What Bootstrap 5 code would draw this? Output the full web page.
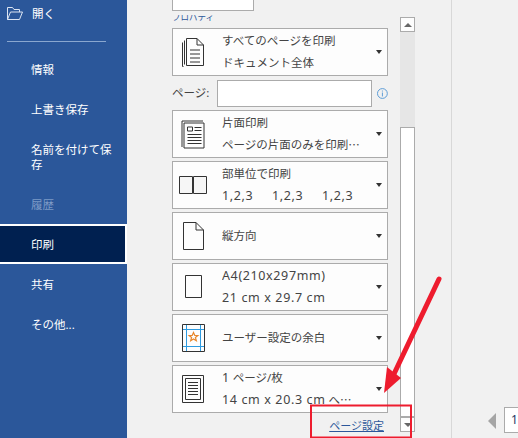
<!DOCTYPE html>
<html lang="ja">
<head>
<meta charset="utf-8">
<title>印刷</title>
<link href="https://cdn.jsdelivr.net/npm/bootstrap@5.3.0/dist/css/bootstrap.min.css" rel="stylesheet">
<style>
html,body{height:100%;}
body{width:518px;height:438px;overflow:hidden;background:#f1f1f1;font-family:"Noto Sans","Noto Sans CJK JP",sans-serif;font-size:11.5px;color:#444;position:relative;}
.shell{height:438px;}
.side{width:127px;flex:none;background:#2b579a;color:#fff;margin-top:-7px;height:445px;}
.side-item{height:40px;padding-left:31px;font-size:11.5px;line-height:15px;}
.side-open{padding-left:7px;gap:9px;}
.side-tall{height:55px;padding-right:14px;}
.side-rule{height:1px;background:#8aa7cf;margin:8px 21px 7px 7px;}
.side-off{color:#7d9ac6;}
.side-on{background:#002050;border:2px solid #fff;border-left:0;padding-left:31px;}
.panel{width:273px;flex:none;padding-left:45px;}
.stub{width:82px;height:11px;background:#fff;border:1px solid #ababab;border-top:0;}
.clipped{height:6px;width:60px;margin-top:4px;overflow:hidden;color:#2b579a;font-size:8.5px;display:flex;align-items:flex-end;}
.clipped span{display:block;flex:none;line-height:9px;white-space:nowrap;}
.stack{gap:3px;width:216px;margin-top:7px;}
.picker{height:48px;width:216px;background:#fdfdfd;border:1px solid #ababab;border-radius:0;padding:0 5px 0 0;color:#444;font-size:11.5px;text-align:left;line-height:22px;}
.picker:hover{background:#fdfdfd;border-color:#ababab;color:#444;}
.picker.dropdown-toggle::after{border-top:4px solid #333;border-left:3.5px solid transparent;border-right:3.5px solid transparent;border-bottom:0;margin:0;flex:none;}
.pick-icon{width:40px;flex:none;display:flex;justify-content:center;}
.pick-text{margin-left:9px;flex:1;min-width:0;white-space:nowrap;overflow:hidden;}
.wide{letter-spacing:.05em;font-size:12.5px;}
.triplet{display:inline-block;width:50px;}
.range{height:27px;margin:1px 0 0;}
.range-label{width:46px;font-size:11.5px;}
.range-input{width:155px;height:27px;border:1px solid #ababab;border-radius:0;padding:0 4px;background:#fff;}
.info{margin-left:5px;}
.page-link-row{height:26px;width:212px;text-align:right;}
.page-setup{color:#2b579a;font-size:11px;text-decoration:underline;}
.rail{width:15px;flex:none;padding-top:17px;}
.rail-btn{height:15px;border:1px solid #ababab;background:#fdfdfd;display:flex;align-items:center;justify-content:center;flex:none;}
.rail-track{height:95px;background:#e6e6e6;}
.rail-thumb{height:290px;background:#fff;border:1px solid #ababab;}
.tri-up{width:0;height:0;border-left:4px solid transparent;border-right:4px solid transparent;border-bottom:4px solid #666;}
.tri-down{width:0;height:0;border-left:4px solid transparent;border-right:4px solid transparent;border-top:4px solid #666;}
.preview{border-left:1px solid #d8d8d8;margin-left:36px;flex:1;min-width:0;padding-left:36px;padding-bottom:5px;}
.tri-left{width:0;height:0;border-top:8px solid transparent;border-bottom:8px solid transparent;border-right:8px solid #a5a5a5;margin-right:8px;}
.page-num{width:14px;height:26px;background:#fff;border:1px solid #ababab;border-right:0;color:#1f3864;font-size:12px;line-height:24px;padding-left:6px;flex:none;}
.overlay{position:absolute;left:0;top:0;pointer-events:none;}
</style>
</head>
<body>
<div class="shell d-flex">
  <nav class="side d-flex flex-column">
    <div class="side-item side-open d-flex align-items-center">
      <svg width="16" height="13" viewBox="0 0 16 13" fill="none" stroke="#dbe4f2" stroke-width="1"><path d="M.5 12.5V.5h5l1.500 2h5.500v2.500M.5 12.500h12l3-7.500H3.500L.5 12.500z"/></svg>
      <span>開く</span>
    </div>
    <div class="side-rule"></div>
    <div class="side-item d-flex align-items-center">情報</div>
    <div class="side-item d-flex align-items-center">上書き保存</div>
    <div class="side-item side-tall d-flex align-items-center">名前を付けて保存</div>
    <div class="side-item side-off d-flex align-items-center">履歴</div>
    <div class="side-item side-on d-flex align-items-center">印刷</div>
    <div class="side-item d-flex align-items-center">共有</div>
    <div class="side-item d-flex align-items-center">その他...</div>
  </nav>

  <section class="panel d-flex flex-column">
    <div class="stub"></div>
    <div class="clipped"><span>プロパティ</span></div>
    <div class="stack d-flex flex-column">
      <button type="button" class="btn picker dropdown-toggle d-flex align-items-center">
        <span class="pick-icon"><svg width="24" height="30" viewBox="0 0 24 30" fill="none" stroke="#333"><path d="M1.500 5.500v24h1M3.500 3.500v24M5.500 1.500v27h17V8l-6.500-6.500zM16 1.500V8h6.500M9 13h10M9 17h10M9 21h10M9 25h10"/></svg></span>
        <span class="pick-text">すべてのページを印刷<br>ドキュメント全体</span>
      </button>
      <div class="range d-flex align-items-center">
        <label class="range-label" for="pg">ページ:</label>
        <input id="pg" class="range-input" type="text">
        <svg class="info" width="11" height="11" viewBox="0 0 11 11" fill="none" stroke="#5b9bd5"><circle cx="5.500" cy="5.500" r="5"/><path d="M5.500 4.500v4M5.500 2.500v1"/></svg>
      </div>
      <button type="button" class="btn picker dropdown-toggle d-flex align-items-center">
        <span class="pick-icon"><svg width="24" height="30" viewBox="0 0 24 30" fill="none" stroke="#333"><path d="M1.500 28.500V2.500h21M3.500 29.500v-25h20v25zM7 8.500h5v4H7zM14 9h7M14 12h7M7 16h14M7 19h14M7 22h14M7 25h14" transform="translate(-.5 -.5)"/></svg></span>
        <span class="pick-text">片面印刷<br>ページの片面のみを印刷⋯</span>
      </button>
      <button type="button" class="btn picker dropdown-toggle d-flex align-items-center">
        <span class="pick-icon"><svg width="28" height="18" viewBox="0 0 28 18" fill="#f6f6f6" stroke="#333"><path d="M.5.500h13v17H.5zM14.500.500h13v17h-13z"/></svg></span>
        <span class="pick-text">部単位で印刷<br><span class="wide"><span class="triplet">1,2,3</span><span class="triplet">1,2,3</span><span class="triplet">1,2,3</span></span></span>
      </button>
      <button type="button" class="btn picker dropdown-toggle d-flex align-items-center">
        <span class="pick-icon"><svg width="21" height="28" viewBox="0 0 21 28" fill="#fdfdfd" stroke="#333"><path d="M.5.500h12.500l7.500 7.500v19.500H.5zM13 .5V8h7.500"/></svg></span>
        <span class="pick-text">縦方向</span>
      </button>
      <button type="button" class="btn picker dropdown-toggle d-flex align-items-center">
        <span class="pick-icon"><svg width="17" height="23" viewBox="0 0 17 23" fill="#fdfdfd" stroke="#333"><path d="M.5.500h16v22H.5z"/></svg></span>
        <span class="pick-text"><span class="wide">A4(210x297mm)<br>21 cm x 29.7 cm</span></span>
      </button>
      <button type="button" class="btn picker dropdown-toggle d-flex align-items-center">
        <span class="pick-icon"><svg width="23" height="28" viewBox="0 0 23 28" fill="none"><path d="M.5.500h22v27H.5z" fill="#fdfdfd" stroke="#333"/><path d="M4.500 1v26M18.500 1v26M1 5.500h21M1 22.500h21" stroke="#2e9be0"/><path d="M11.500 8.500l1.300 3h3l-2.400 2 .9 3.200-2.800-1.800-2.800 1.800.9-3.200-2.400-2h3z" stroke="#e8862a" stroke-width="1.200"/></svg></span>
        <span class="pick-text">ユーザー設定の余白</span>
      </button>
      <button type="button" class="btn picker dropdown-toggle d-flex align-items-center">
        <span class="pick-icon"><svg width="22" height="28" viewBox="0 0 22 28" fill="none" stroke="#333"><path d="M.5.500h21v27H.5zM3.500 3.500h15v21h-15zM6 7.500h10M6 10.500h10M6 13.500h10M6 16.500h10M6 19.500h10"/></svg></span>
        <span class="pick-text"><span class="wide">1</span> ページ/枚<br><span class="wide">14 cm x 20.3 cm</span> へ⋯</span>
      </button>
    </div>
    <div class="page-link-row pt-1"><a class="page-setup" href="#">ページ設定</a></div>
  </section>

  <div class="rail d-flex flex-column">
    <div class="rail-btn"><span class="tri-up"></span></div>
    <div class="rail-track"></div>
    <div class="rail-thumb"></div>
    <div class="rail-btn"><span class="tri-down"></span></div>
  </div>

  <div class="preview d-flex align-items-end">
    <span class="tri-left mb-1"></span>
    <span class="page-num">1</span>
  </div>
</div>

<svg class="overlay" width="518" height="438" viewBox="0 0 518 438" fill="none">
  <path d="M439 279L393 376" stroke="#ee1c2e" stroke-width="5" stroke-linecap="round"/>
  <path d="M384 393L387 367L401 378z" fill="#ee1c2e"/>
  <rect x="311" y="405.500" width="100" height="32" stroke="#ee1c2e" stroke-width="2"/>
</svg>
<script src="https://cdn.jsdelivr.net/npm/bootstrap@5.3.0/dist/js/bootstrap.bundle.min.js"></script>
</body>
</html>
